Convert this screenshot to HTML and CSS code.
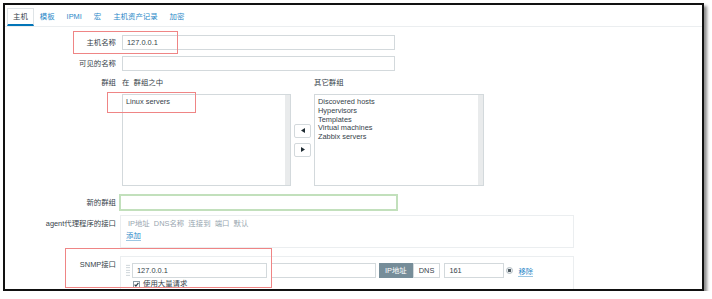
FILE: index.html
```html
<!DOCTYPE html>
<html lang="zh-CN">
<head>
  <meta charset="UTF-8" />
  <meta name="viewport" content="width=device-width, initial-scale=1.0"/>
  <title>主机 - Zabbix</title>
  <link rel="stylesheet" href="styles.css">
</head>
<body>
  <div class="frame">
    <ul class="tabs">
      <li class="tab active">主机</li>
      <li class="tab">模板</li>
      <li class="tab">IPMI</li>
      <li class="tab">宏</li>
      <li class="tab">主机资产记录</li>
      <li class="tab">加密</li>
    </ul>

    <form class="host-form">
      <div class="row">
        <label class="row-label" for="host">主机名称</label>
        <div class="field"><input class="text-input" id="host" type="text" value="127.0.0.1" /></div>
      </div>

      <div class="row">
        <label class="row-label" for="visible">可见的名称</label>
        <div class="field"><input class="text-input" id="visible" type="text" /></div>
      </div>

      <div class="row groups-row">
        <label class="row-label short">群组</label>
        <div class="field">
          <div class="groups-head">
            <span class="head-left">在&nbsp; 群组之中</span>
            <span>其它群组</span>
          </div>
          <div class="groups">
            <div class="listbox">
              <div>Linux servers</div>
            </div>
            <div class="move-btns">
              <button type="button" class="move">
                <svg width="4" height="5" viewBox="0 0 4 5"><polygon points="4,0 4,5 0,2.5" fill="#1f2c33"/></svg>
              </button>
              <button type="button" class="move">
                <svg width="4" height="5" viewBox="0 0 4 5"><polygon points="0,0 0,5 4,2.5" fill="#1f2c33"/></svg>
              </button>
            </div>
            <div class="listbox right">
              <div>Discovered hosts</div>
              <div>Hypervisors</div>
              <div>Templates</div>
              <div>Virtual machines</div>
              <div>Zabbix servers</div>
            </div>
          </div>
        </div>
      </div>

      <div class="row new-group-row">
        <label class="row-label tall" for="newgroup">新的群组</label>
        <div class="field"><input class="text-input new-group" id="newgroup" type="text" /></div>
      </div>

      <div class="row box-row">
        <label class="row-label boxed">agent代理程序的接口</label>
        <div class="field">
          <div class="iface-box agent">
            <div class="iface-head">IP地址 &nbsp;DNS名称 &nbsp;连接到 &nbsp;端口 &nbsp;默认</div>
            <a class="link add" href="#">添加</a>
          </div>
        </div>
      </div>

      <div class="row box-row">
        <label class="row-label boxed">SNMP接口</label>
        <div class="field">
          <div class="iface-box snmp">
            <div class="iface-row">
              <span class="handle"></span>
              <input class="text-input ip" type="text" value="127.0.0.1" />
              <input class="text-input dns" type="text" />
              <div class="seg-group">
                <span class="seg on">IP地址</span>
                <span class="seg">DNS</span>
              </div>
              <input class="text-input port" type="text" value="161" />
              <span class="radio"></span>
              <a class="link" href="#">移除</a>
            </div>
            <div class="check-row">
              <svg class="check" width="7" height="7" viewBox="0 0 7 7">
                <rect x="0.5" y="0.5" width="6" height="6" fill="#fff" stroke="#8a9aa5"/>
                <polyline points="1.6,3.6 2.9,5 5.4,1.8" fill="none" stroke="#2c3a42" stroke-width="1.2"/>
              </svg>
              <span>使用大量请求</span>
            </div>
          </div>
        </div>
      </div>
    </form>

    <!-- red annotation boxes drawn over the screenshot -->
    <div class="mark mark-host"></div>
    <div class="mark mark-group"></div>
    <div class="mark mark-snmp"></div>
  </div>
</body>
</html>
```

FILE: styles.css
```css
* {
  box-sizing: border-box;
}
body {
  margin: 0;
  background: #fff;
  font-family: "Liberation Sans", "Noto Sans CJK SC", sans-serif;
  font-size: 7.4px;
  color: #35424a;
}
.frame {
  position: relative;
  margin: 3px 0 0 3px;
  width: 701px;
  height: 288px;
  border: 2px solid #111;
  box-shadow: 3px 3px 3px rgba(0, 0, 0, 0.45);
  overflow: hidden;
  background: #fff;
}
.tabs {
  display: flex;
  margin: 0;
  padding: 3px 0 0 2px;
  height: 22px;
  list-style: none;
  border-bottom: 1px solid #ebeef0;
}
.tab {
  padding: 0 5px;
  line-height: 15px;
  border: 1px solid transparent;
  border-bottom-width: 2px;
  color: #2a88c8;
}
.tab.active {
  color: #35424a;
  border-color: #dfe4e7;
  border-bottom-color: #0275b8;
}
.host-form {
  padding-top: 8px;
}
.row {
  display: grid;
  grid-template-columns: 111px 1fr;
  column-gap: 4px;
  margin-bottom: 6px;
}
.row-label {
  text-align: right;
  line-height: 15px;
  white-space: nowrap;
}
.row-label.short {
  line-height: 12px;
}
.row-label.tall {
  line-height: 17px;
}
.row-label.boxed {
  padding-top: 4px;
  line-height: 10px;
}
.text-input {
  display: block;
  margin: 0 0 0 2px;
  width: 273px;
  height: 15px;
  padding: 0 4px;
  border: 1px solid #d3d9dc;
  border-radius: 0;
  font-family: inherit;
  font-size: 7.4px;
  color: #35424a;
  background: #fff;
  outline: none;
}
.groups-row {
  margin-bottom: 8px;
}
.groups-head {
  display: flex;
  margin-left: 2px;
  line-height: 12px;
}
.head-left {
  width: 192px;
}
.groups {
  display: flex;
  align-items: center;
  margin: 5px 0 0 2px;
}
.listbox {
  width: 169px;
  height: 92px;
  padding: 3px 3px;
  line-height: 8.75px;
  border: 1px solid #d3d9dc;
  background: linear-gradient(to left, #e9ebec 5px, #fff 5px);
}
.listbox.right {
  width: 170px;
}
.move-btns {
  display: flex;
  flex-direction: column;
  align-items: center;
  gap: 5px;
  width: 23px;
}
.move {
  display: flex;
  align-items: center;
  justify-content: center;
  width: 17px;
  height: 14px;
  padding: 0;
  border: 1px solid #d3d9dc;
  border-radius: 2px;
  background: #fff;
}
.new-group-row {
  margin-bottom: 4px;
}
.text-input.new-group {
  margin-left: -1px;
  width: 279px;
  height: 17px;
  border: 2px solid #c2e0bc;
}
.box-row {
  margin-bottom: 8px;
}
.iface-box {
  width: 454px;
  border: 1px solid #ebeef0;
}
.iface-box.agent {
  padding: 3px 5px 6px 5px;
}
.iface-head {
  margin-left: 2px;
  line-height: 10px;
  color: #98a6af;
}
.link {
  color: #2a88c8;
  text-decoration: none;
  border-bottom: 1px solid #9cc7e3;
}
.add {
  display: inline-block;
  margin-top: 2px;
  line-height: 9px;
}
.iface-box.snmp {
  height: 40px;
  padding: 6px 5px 0 5px;
}
.iface-row {
  display: flex;
  align-items: center;
}
.handle {
  width: 4px;
  height: 13px;
  margin-right: 2px;
  background-image: radial-gradient(circle, #c3ccd1 0.6px, transparent 0.8px);
  background-size: 2px 2.5px;
}
.text-input.ip {
  margin: 0;
  width: 135px;
}
.text-input.dns {
  margin: 0 0 0 4px;
  width: 105px;
}
.seg-group {
  display: flex;
  margin-left: 3px;
}
.seg {
  height: 15px;
  padding: 0 5px;
  line-height: 13px;
  border: 1px solid #d3d9dc;
  background: #fff;
}
.seg.on {
  color: #fff;
  background: #768d99;
  border-color: #768d99;
}
.text-input.port {
  margin: 0 0 0 4px;
  width: 60px;
}
.radio {
  width: 7px;
  height: 7px;
  margin: 0 5px 0 2px;
  border: 1px solid #b0bbc1;
  border-radius: 50%;
  background: radial-gradient(circle, #4f5b62 1.4px, #eceff1 1.8px);
}
.check-row {
  display: flex;
  align-items: center;
  gap: 3px;
  margin: 2px 0 0 7px;
  line-height: 8px;
}
.mark {
  position: absolute;
  border: 1px solid #ef8585;
}
.mark-host {
  left: 68px;
  top: 26px;
  width: 105px;
  height: 23px;
}
.mark-group {
  left: 102px;
  top: 87px;
  width: 89px;
  height: 21px;
}
.mark-snmp {
  left: 60px;
  top: 243px;
  width: 207px;
  height: 40px;
}
```
